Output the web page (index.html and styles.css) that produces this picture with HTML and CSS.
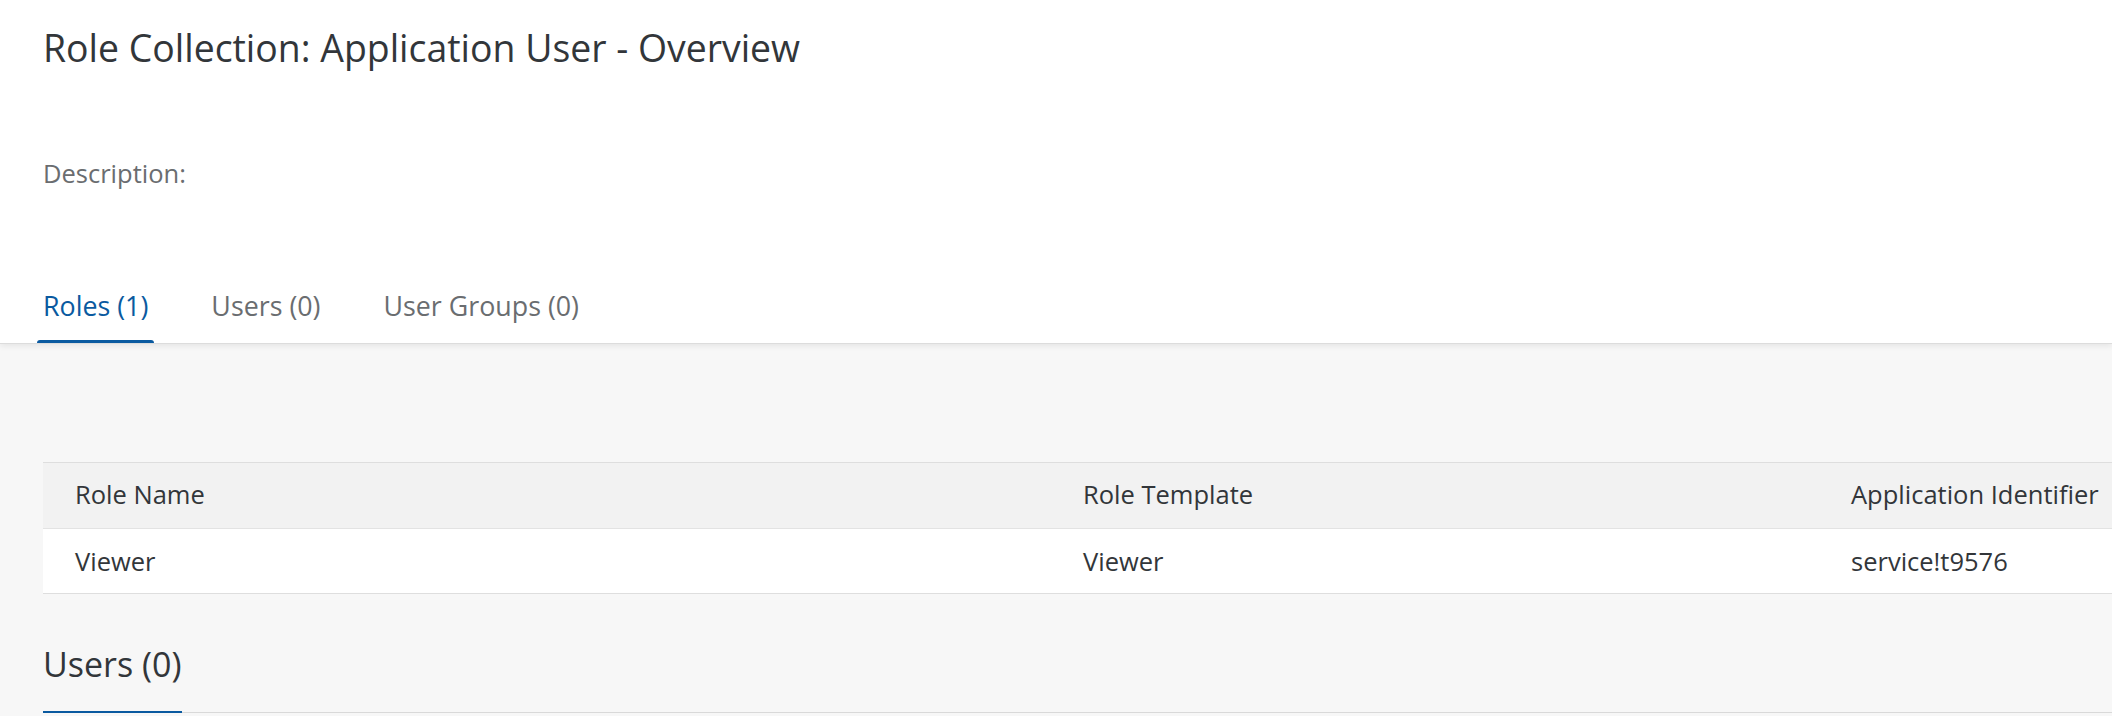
FILE: index.html
```html
<!DOCTYPE html>
<html lang="en">
<head>
<meta charset="utf-8">
<title>Role Collection: Application User - Overview</title>
<link rel="stylesheet" href="styles.css">
</head>
<body>
  <header class="page-header">
    <h1 class="page-title">Role Collection: Application User - Overview</h1>
    <div class="description">Description:</div>
    <nav class="tabs">
      <div class="tab tab-selected">
        <span class="tab-label">Roles (1)</span>
        <span class="tab-indicator"></span>
      </div>
      <div class="tab">
        <span class="tab-label">Users (0)</span>
        <span class="tab-indicator"></span>
      </div>
      <div class="tab">
        <span class="tab-label">User Groups (0)</span>
        <span class="tab-indicator"></span>
      </div>
    </nav>
  </header>
  <main class="content">
    <div class="table">
      <div class="table-row table-head">
        <div class="cell">Role Name</div>
        <div class="cell">Role Template</div>
        <div class="cell">Application Identifier</div>
      </div>
      <div class="table-row table-body-row">
        <div class="cell">Viewer</div>
        <div class="cell">Viewer</div>
        <div class="cell">service!t9576</div>
      </div>
    </div>
    <section class="section">
      <div class="section-bar">
        <h2 class="section-title">Users (0)</h2>
      </div>
    </section>
  </main>
</body>
</html>
```

FILE: styles.css
```css
html, body {
  margin: 0;
  padding: 0;
}

body {
  width: 2112px;
  height: 716px;
  overflow: hidden;
  font-family: "Open Sans", "Noto Sans", sans-serif;
  color: #32363a;
  background: #f7f7f7;
}

.page-header {
  background: #ffffff;
  padding: 23px 0 0 43px;
  box-shadow: 0 1px 0 #dcdcdc, 0 3px 6px rgba(0, 0, 0, 0.08);
  position: relative;
  z-index: 1;
}

.page-title {
  margin: 0;
  font-size: 37.4px;
  font-weight: 400;
  line-height: 50px;
  color: #32363a;
}

.description {
  margin-top: 82px;
  font-size: 25.5px;
  line-height: 36px;
  color: #6a6d70;
}

.tabs {
  display: flex;
  gap: 51px;
  margin-top: 97px;
  margin-left: -6px;
}

.tab {
  display: flex;
  flex-direction: column;
}

.tab-label {
  padding: 0 6px 16px;
  font-size: 26.8px;
  line-height: 36px;
  color: #6a6d70;
}

.tab-indicator {
  height: 3px;
  border-radius: 3px 3px 0 0;
}

.tab-selected .tab-label {
  color: #0a5aa0;
}

.tab-selected .tab-indicator {
  background: #0a5aa0;
}

.content {
  padding: 119px 0 0 43px;
}

.table {
  display: flex;
  flex-direction: column;
}

.table-row {
  display: grid;
  grid-template-columns: 1008px 768px 1fr;
  font-size: 25.5px;
  line-height: 36px;
  color: #32363a;
}

.cell {
  padding-left: 32px;
  white-space: nowrap;
}

.table-head {
  background: #f2f2f2;
  border-top: 1px solid #dedede;
  border-bottom: 1px solid #e3e3e3;
}

.table-head .cell {
  padding-top: 13px;
  padding-bottom: 16px;
}

.table-body-row {
  background: #ffffff;
  border-bottom: 1px solid #dedede;
}

.table-body-row .cell {
  padding-top: 14px;
  padding-bottom: 14px;
}

.section {
  margin-top: 47px;
}

.section-bar {
  border-bottom: 1px solid #d9d9d9;
}

.section-title {
  display: inline-block;
  margin: 0 0 -1px;
  padding-bottom: 24px;
  font-size: 34px;
  font-weight: 400;
  line-height: 46px;
  color: #32363a;
  border-bottom: 2px solid #0a5aa0;
}
```
